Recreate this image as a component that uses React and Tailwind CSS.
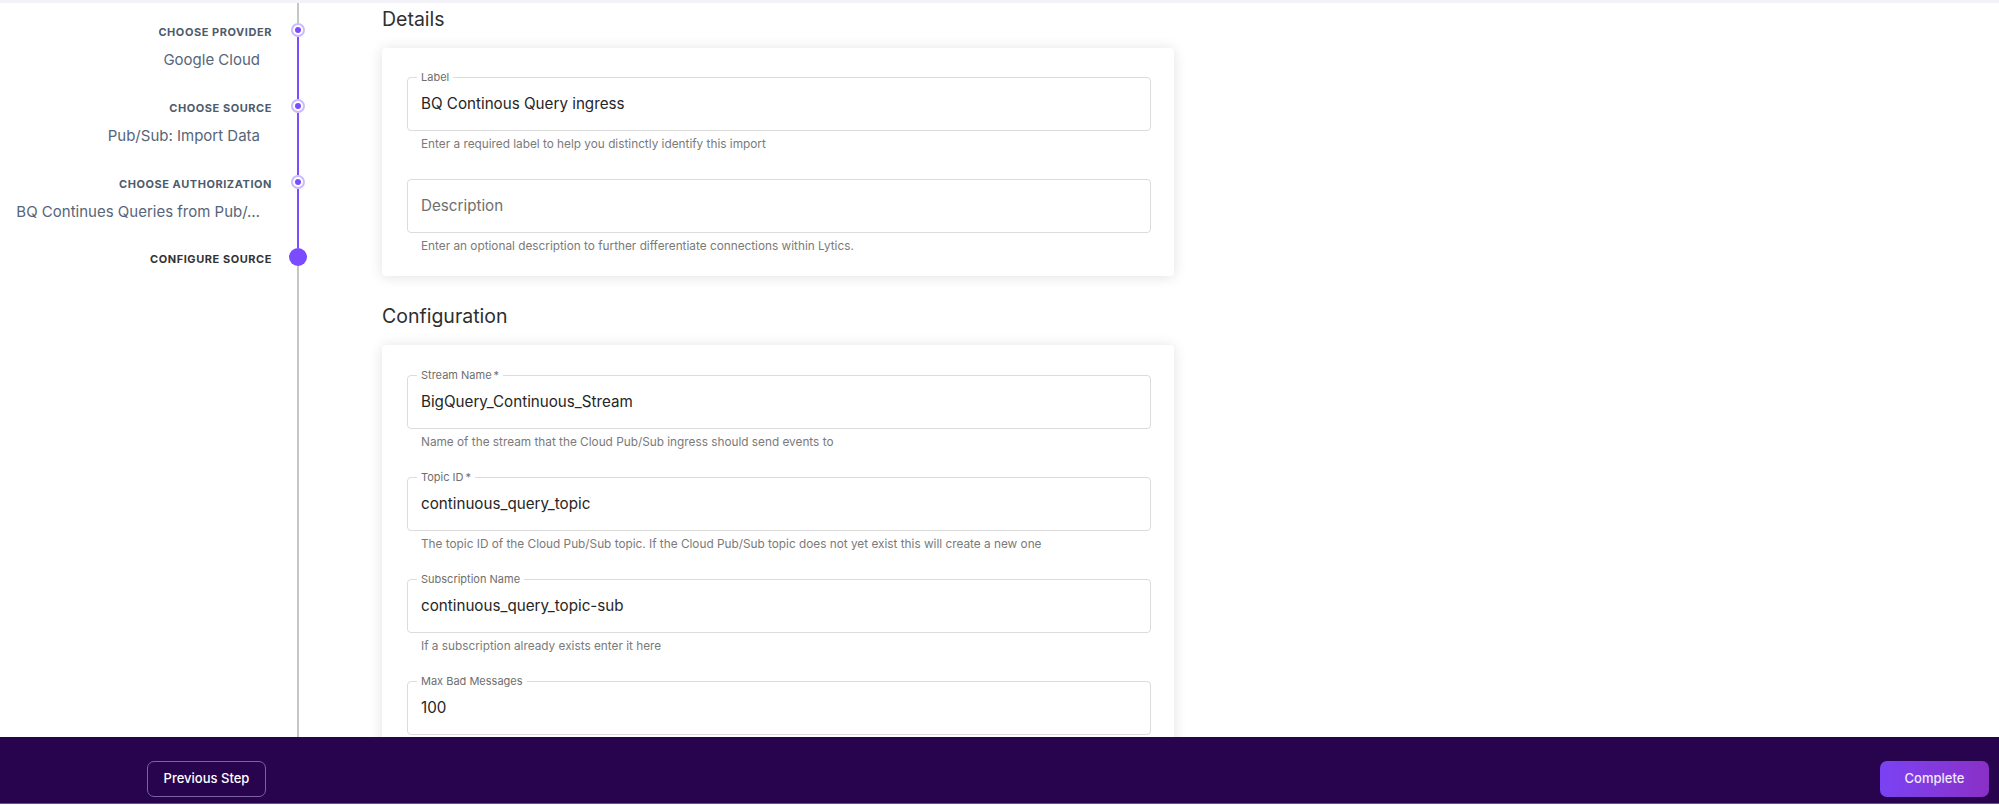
import React from "react";

const steps = [
  { label: "Choose Provider", value: "Google Cloud", h: "h-[76px]" },
  { label: "Choose Source", value: "Pub/Sub: Import Data", h: "h-[76px]" },
  { label: "Choose Authorization", value: "BQ Continues Queries from Pub/…", h: "h-[73px]" },
];

function SmallDot() {
  return (
    <div className="w-[14px] h-[14px] rounded-full border-2 border-[#c9bbfd] bg-white flex items-center justify-center shrink-0">
      <div className="w-[6px] h-[6px] rounded-full bg-[#7c4dff]" />
    </div>
  );
}

function Field({ label, value, placeholder, helper, last }) {
  return (
    <div className={last ? "" : "mb-[27px]"}>
      <div className="relative h-[54px] border border-[#dcdcdc] rounded-[4px] px-[13px] flex items-center">
        {label && (
          <span className="absolute left-[9px] -top-[8px] px-[4px] bg-white text-[11px] leading-[14px] text-[#6e6e6e]">
            {label}
          </span>
        )}
        {value ? (
          <span className="text-[15.2px] text-[#262626]">{value}</span>
        ) : (
          <span className="text-[15.2px] text-[#6f6f6f]">{placeholder}</span>
        )}
      </div>
      {helper && (
        <div className="mt-[6px] pl-[14px] text-[11.8px] leading-[15px] text-[#7a7a7a]">{helper}</div>
      )}
    </div>
  );
}

export default function App() {
  return (
    <div className="w-full h-[805px] overflow-hidden bg-white flex flex-col font-['Inter',sans-serif]">
      <div className="h-[3px] bg-[#f3f2f9] shrink-0" />
      <div className="flex-1 min-h-0 flex overflow-hidden">
        {/* Sidebar */}
        <div className="w-[324px] shrink-0 flex flex-col">
          <div className="flex h-[20px]">
            <div className="w-[272px]" />
            <div className="w-[52px] flex justify-center">
              <div className="w-[2px] h-full bg-[#c6c6c6]" />
            </div>
          </div>
          {steps.map((s) => (
            <div key={s.label} className={`flex ${s.h}`}>
              <div className="w-[272px] flex flex-col items-end">
                <div className="mt-[1px] text-[11px] leading-[16px] font-bold uppercase tracking-[0.05em] text-[#4d5b6c]">
                  {s.label}
                </div>
                <div className="mt-[9px] pr-[12px] text-[15px] leading-[22px] text-[#56657a] whitespace-nowrap">
                  {s.value}
                </div>
              </div>
              <div className="w-[52px] flex flex-col items-center">
                <SmallDot />
                <div className="flex-1 w-[2px] bg-[#7c4dff]" />
              </div>
            </div>
          ))}
          <div className="flex flex-1">
            <div className="w-[272px] flex flex-col items-end">
              <div className="mt-[3px] text-[11px] leading-[16px] font-bold uppercase tracking-[0.05em] text-[#333]">
                Configure Source
              </div>
            </div>
            <div className="w-[52px] flex flex-col items-center">
              <div className="w-[18px] h-[18px] rounded-full bg-[#7b4cff] shrink-0" />
              <div className="flex-1 w-[2px] bg-[#c6c6c6]" />
            </div>
          </div>
        </div>

        {/* Content */}
        <div className="ml-[58px] w-[792px] shrink-0 pt-[4px]">
          <h2 className="text-[19.5px] leading-[24px] text-[#2f2f2f] mb-[17px]">Details</h2>
          <div className="bg-white rounded-[4px] shadow-[0_1px_14px_rgba(0,0,0,0.12)] pt-[29px] pl-[25px] pr-[23px] pb-[22px]">
            <Field
              label="Label"
              value="BQ Continous Query ingress"
              helper="Enter a required label to help you distinctly identify this import"
            />
            <Field
              placeholder="Description"
              helper="Enter an optional description to further differentiate connections within Lytics."
              last
            />
          </div>

          <h2 className="mt-[28px] text-[19.5px] leading-[24px] text-[#2f2f2f] mb-[17px]">Configuration</h2>
          <div className="bg-white rounded-[4px] shadow-[0_1px_14px_rgba(0,0,0,0.12)] pt-[30px] pl-[25px] pr-[23px] pb-[23px]">
            <Field
              label={"Stream Name\u2009*"}
              value="BigQuery_Continuous_Stream"
              helper="Name of the stream that the Cloud Pub/Sub ingress should send events to"
            />
            <Field
              label={"Topic ID\u2009*"}
              value="continuous_query_topic"
              helper="The topic ID of the Cloud Pub/Sub topic. If the Cloud Pub/Sub topic does not yet exist this will create a new one"
            />
            <Field
              label="Subscription Name"
              value="continuous_query_topic-sub"
              helper="If a subscription already exists enter it here"
            />
            <Field label="Max Bad Messages" value="100" last />
          </div>
        </div>
      </div>

      {/* Footer */}
      <div className="h-[66px] shrink-0 bg-[#28044f] flex items-start justify-between pt-[24px]">
        <button className="ml-[147px] w-[119px] h-[36px] rounded-[7px] border border-[#7a63a0] text-white text-[13px] font-medium">
          Previous Step
        </button>
        <button className="mr-[10px] w-[109px] h-[36px] rounded-[7px] bg-gradient-to-r from-[#7a42f4] to-[#8a2fc6] text-[#f1eaff] text-[13px] font-medium">
          Complete
        </button>
      </div>
      <div className="h-[1px] bg-[#6d5090] shrink-0" />
      <div className="h-[1px] bg-white shrink-0" />
    </div>
  );
}
